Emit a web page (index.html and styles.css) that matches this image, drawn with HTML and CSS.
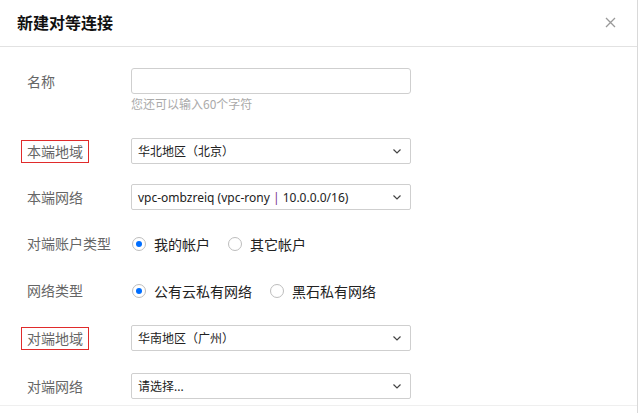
FILE: index.html
```html
<!DOCTYPE html>
<html lang="zh-CN">
<head>
<meta charset="utf-8">
<title>新建对等连接</title>
<link rel="stylesheet" href="styles.css">
</head>
<body>
<div class="dialog">
  <div class="dialog-head">
    <h3 class="dialog-title">新建对等连接</h3>
    <button class="close-btn" aria-label="关闭">
      <svg width="11" height="11" viewBox="0 0 11 11"><path d="M1 1L10 10M10 1L1 10" stroke="#999" stroke-width="1.3" fill="none"/></svg>
    </button>
  </div>
  <div class="dialog-body">
    <div class="form-row row-name">
      <div class="form-label"><span class="label-text">名称</span></div>
      <div class="form-ctrl">
        <input class="text-input" type="text">
        <div class="hint">您还可以输入60个字符</div>
      </div>
    </div>
    <div class="form-row">
      <div class="form-label"><span class="label-text is-marked">本端地域</span></div>
      <div class="form-ctrl">
        <div class="select"><span class="select-text">华北地区（北京）</span><svg class="chev" width="8" height="5" viewBox="0 0 8 5"><path d="M0.5 0.5L4 4L7.5 0.5" stroke="#444" stroke-width="1.2" fill="none"/></svg></div>
      </div>
    </div>
    <div class="form-row">
      <div class="form-label"><span class="label-text">本端网络</span></div>
      <div class="form-ctrl">
        <div class="select"><span class="select-text">vpc-ombzreiq (vpc-rony <span class="pipe">|</span> 10.0.0.0/16)</span><svg class="chev" width="8" height="5" viewBox="0 0 8 5"><path d="M0.5 0.5L4 4L7.5 0.5" stroke="#444" stroke-width="1.2" fill="none"/></svg></div>
      </div>
    </div>
    <div class="form-row row-radio">
      <div class="form-label"><span class="label-text">对端账户类型</span></div>
      <div class="form-ctrl radios">
        <label class="radio is-checked"><span class="radio-dot"></span>我的帐户</label>
        <label class="radio"><span class="radio-dot"></span>其它帐户</label>
      </div>
    </div>
    <div class="form-row row-radio row-radio-last">
      <div class="form-label"><span class="label-text">网络类型</span></div>
      <div class="form-ctrl radios">
        <label class="radio is-checked"><span class="radio-dot"></span>公有云私有网络</label>
        <label class="radio"><span class="radio-dot"></span>黑石私有网络</label>
      </div>
    </div>
    <div class="form-row row-peer-region">
      <div class="form-label"><span class="label-text is-marked">对端地域</span></div>
      <div class="form-ctrl">
        <div class="select"><span class="select-text">华南地区（广州）</span><svg class="chev" width="8" height="5" viewBox="0 0 8 5"><path d="M0.5 0.5L4 4L7.5 0.5" stroke="#444" stroke-width="1.2" fill="none"/></svg></div>
      </div>
    </div>
    <div class="form-row">
      <div class="form-label"><span class="label-text">对端网络</span></div>
      <div class="form-ctrl">
        <div class="select"><span class="select-text">请选择...</span><svg class="chev" width="8" height="5" viewBox="0 0 8 5"><path d="M0.5 0.5L4 4L7.5 0.5" stroke="#444" stroke-width="1.2" fill="none"/></svg></div>
      </div>
    </div>
  </div>
  <div class="dialog-foot"></div>
</div>
</body>
</html>
```

FILE: styles.css
```css
* { box-sizing: border-box; }
html, body { margin: 0; padding: 0; background: #fff; }
body {
  font-family: "Noto Sans", "Noto Sans CJK SC", sans-serif;
  color: #333;
  height: 413px;
  overflow: hidden;
}
.dialog {
  width: 638px;
  height: 413px;
  border-right: 1px solid #d9d9d9;
  background: #fff;
}
.dialog-head {
  height: 47px;
  border-bottom: 1px solid #e2e2e2;
  display: flex;
  align-items: center;
  justify-content: space-between;
  padding: 0 21px 2px 17px;
}
.dialog-title {
  margin: 0;
  font-family: "Noto Sans CJK SC", sans-serif;
  font-size: 16px;
  font-weight: 700;
  color: #111;
  line-height: 22px;
}
.close-btn {
  border: 0;
  background: transparent;
  padding: 0;
  width: 11px;
  height: 11px;
  display: flex;
}
.dialog-body {
  padding: 21px 0 0 21px;
  height: 359px;
  border-bottom: 1px solid #efefef;
}
.form-row {
  display: flex;
  align-items: flex-start;
  margin-bottom: 20px;
}
.row-name { margin-bottom: 25px; }
.row-radio-last { margin-bottom: 21px; }
.row-peer-region { margin-bottom: 22px; }
.form-label {
  width: 110px;
  flex: none;
  height: 26px;
  display: flex;
  align-items: center;
}
.row-radio .form-label, .row-radio .form-ctrl { height: 27px; }
.label-text {
  font-family: "Noto Sans CJK SC", sans-serif;
  font-size: 14px;
  color: #666;
  line-height: 21px;
  padding: 0 5px;
  border: 1px solid transparent;
}
.label-text.is-marked { border-color: #e02b2b; }
.form-ctrl { width: 280px; }
.text-input {
  display: block;
  width: 280px;
  height: 26px;
  border: 1px solid #cfcfcf;
  border-radius: 3px;
  margin: 0;
  padding: 0 6px;
  font: inherit;
  outline: none;
}
.hint {
  font-family: "Noto Sans CJK SC", sans-serif;
  font-size: 12px;
  color: #aaa;
  line-height: 18px;
  margin-top: 1px;
}
.select {
  height: 26px;
  border: 1px solid #cfcfcf;
  border-radius: 2px;
  display: flex;
  align-items: center;
  justify-content: space-between;
  padding: 0 9px 0 6px;
}
.select-text {
  font-size: 12px;
  color: #222;
  white-space: nowrap;
}
.pipe { color: #7a2f86; }
.chev { flex: none; }
.radios {
  display: flex;
  align-items: center;
  gap: 17px;
}
.radio {
  display: flex;
  align-items: center;
  font-family: "Noto Sans CJK SC", sans-serif;
  font-size: 14px;
  color: #222;
  line-height: 20px;
}
.radio-dot {
  width: 14px;
  height: 14px;
  border: 1px solid #bdbdbd;
  border-radius: 50%;
  margin: 0 8px 0 1px;
  display: flex;
  align-items: center;
  justify-content: center;
  flex: none;
}
.radio.is-checked .radio-dot::after {
  content: "";
  width: 6px;
  height: 6px;
  border-radius: 50%;
  background: #006eff;
}
```
